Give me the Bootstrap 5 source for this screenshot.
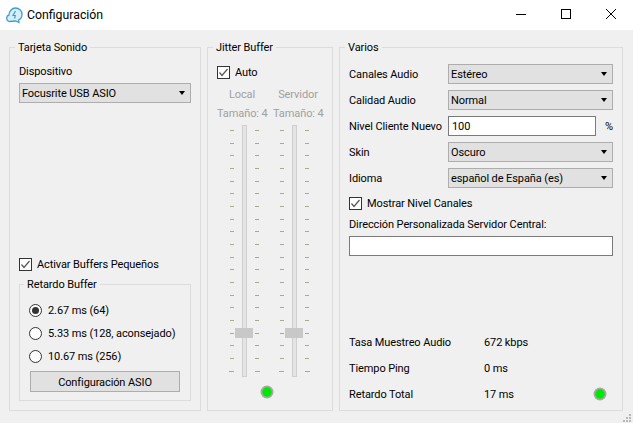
<!DOCTYPE html>
<html lang="es">
<head>
    <meta charset="UTF-8">
    <title>Configuración</title>
    <meta name="viewport" content="width=device-width, initial-scale=1">
    <link href="https://cdn.jsdelivr.net/npm/bootstrap@5.3.0/dist/css/bootstrap.min.css" rel="stylesheet">
    <style>
        body { width: 633px; height: 423px; overflow: hidden; background: #f0f0f0; color: #000; font: 11px/16px Roboto, sans-serif; letter-spacing: -.1px; }
        .title-bar { height: 30px; background: #fff; padding-left: 6px; font-size: 12.3px; letter-spacing: 0; }
        .title-bar .win-btns { margin-left: auto; }
        .win-btn { width: 45px; height: 30px; padding-bottom: 2px; }
        .panels { height: 393px; padding: 10px 10px 12px 9px; gap: 6px; position: relative; }
        .grp { border: 1px solid #dcdcdc; margin: 0; padding: 0; min-width: 0; }
        .grp > legend { float: none; width: auto; margin: 0 0 0 -4px; padding: 2px 3px 0; font-size: 11px; line-height: 12px; }
        .grp-sound { width: 192px; padding: 9px 9px 9px 9px; }
        .grp-jitter { width: 126px; padding: 11px 0 0 9px; }
        .grp-misc { width: 284px; padding: 10px 9px 6px 9px; }
        .grp-delay { height: 124px; padding: 9px 10px 8px 10px; }
        .grp-delay > legend { margin-left: -6px; }
        .combo { height: 20px; padding: 2px 5px 0 2px; background: #e1e1e1; border: 1px solid #adadad; border-radius: 0; color: #000; font-size: 11px; line-height: 16px; letter-spacing: -.1px; }
        .combo::after { margin: -2px 0 0; border-top: 4px solid #000; border-left: 3.5px solid transparent; border-right: 3.5px solid transparent; border-bottom: 0; }
        .combo-wide { width: 165px; }
        .row-gap { gap: 6px; }
        .field { height: 20px; }
        .field > span, .check-row > span { padding-top: 2px; }
        .field-lbl { width: 99px; flex: none; white-space: nowrap; }
        .txt-in { height: 20px; border: 1px solid #7a7a7a; background: #fff; padding: 0 3px; line-height: 20px; }
        .txt-level { width: 148px; }
        .check-row { gap: 5px; height: 14px; white-space: nowrap; margin: 0; }
        .check-row svg { flex: none; }
        .small-check { margin-bottom: 6px; }
        .show-levels { margin: 8px 0 6px; }
        .line-lbl { padding-top: 1px; margin-bottom: 3px; }
        .asio-btn { height: 21px; background: #e1e1e1; border: 1px solid #adadad; text-align: center; line-height: 21px; }
        .radio-stack { gap: 9px; margin: 3px 0 8px -1px; }
        .radio-stack .check-row { gap: 6px; }
        .dim { color: #a0a0a0; text-align: center; white-space: nowrap; padding-top: 1px; }
        .head-row { gap: 6px; }
        .local-row { margin-top: 7px; }
        .size-row { margin: 2px 0 3px; }
        .head-col { width: 50px; }
        .sliders-row { margin-left: 3px; }
        .slider-col { width: 50px; height: 252px; padding-left: 10px; }
        .ticks { width: 4px; padding: 5px 0; }
        .ticks span { display: block; height: 1px; background: #a8a899; }
        .ticks-l span:last-child { margin-left: -1px; width: 5px; }
        .ticks-r span:last-child { width: 5px; }
        .track { width: 5px; margin: 0 8px; background: #e3e5e5; border: 1px solid #cfcfcf; position: relative; }
        .thumb { position: absolute; left: -8px; top: 202px; width: 18px; height: 10px; background: #c8c8c8; }
        .led-slot { width: 100px; margin-top: 8px; }
        .stat-lbl { width: 135px; flex: none; }
        .led-stat { margin-right: 6px; }
        .size-grip { position: absolute; right: 1px; bottom: 1px; }
    </style>
</head>
<body>

<!-- barra de titulo -->
<div class="title-bar d-flex align-items-center">
    <svg width="17" height="17" viewBox="0 0 17 17" class="me-1">
        <path d="M4 14.500C1.500 14.500.5 12.500.7 10.700 1 9 2 8.200 3 8 3.200 4 6 1 9.500 1c3.500 0 6.500 2.800 6.500 6.300 0 3-1.500 5-3.500 5.700L13 15.500 9.500 14Z" fill="#d7edf8" stroke="#3f9fcf" stroke-width="1.300"/>
        <path d="M9.500 4 7 8.500h2.300L8.500 11.500" fill="none" stroke="#3f9fcf" stroke-width="1.200"/>
    </svg>
    <span>Configuración</span>
    <div class="win-btns d-flex">
        <div class="win-btn d-flex align-items-center justify-content-center"><svg width="10" height="10"><path d="M0 5.500h10" stroke="#000"/></svg></div>
        <div class="win-btn d-flex align-items-center justify-content-center"><svg width="10" height="10"><rect x=".5" y=".5" width="9" height="9" fill="none" stroke="#000"/></svg></div>
        <div class="win-btn d-flex align-items-center justify-content-center"><svg width="10" height="10"><path d="M0 0l10 10M10 0L0 10" stroke="#000"/></svg></div>
    </div>
</div>

<div class="panels d-flex">
    <!-- Tarjeta Sonido -->
    <fieldset class="grp grp-sound d-flex flex-column">
        <legend>Tarjeta Sonido</legend>
        <div class="line-lbl">Dispositivo</div>
        <button type="button" class="btn combo dropdown-toggle d-flex align-items-center justify-content-between">Focusrite USB ASIO</button>
        <label class="check-row small-check d-flex align-items-center mt-auto">
            <svg width="13" height="13"><rect x=".5" y=".5" width="12" height="12" fill="#fff" stroke="#333"/><path d="M2.500 6.500 5 9.500 10.500 3" fill="none" stroke="#555" stroke-width="1.200"/></svg>
            <span>Activar Buffers Pequeños</span>
        </label>
        <fieldset class="grp grp-delay d-flex flex-column">
            <legend>Retardo Buffer</legend>
            <div class="radio-stack d-flex flex-column">
                <label class="check-row d-flex align-items-center">
                    <svg width="13" height="13"><circle cx="6.500" cy="6.500" r="6" fill="#fff" stroke="#333"/><circle cx="6.500" cy="6.500" r="3.500" fill="#333"/></svg>
                    <span>2.67 ms (64)</span>
                </label>
                <label class="check-row d-flex align-items-center">
                    <svg width="13" height="13"><circle cx="6.500" cy="6.500" r="6" fill="#fff" stroke="#333"/></svg>
                    <span>5.33 ms (128, aconsejado)</span>
                </label>
                <label class="check-row d-flex align-items-center">
                    <svg width="13" height="13"><circle cx="6.500" cy="6.500" r="6" fill="#fff" stroke="#333"/></svg>
                    <span>10.67 ms (256)</span>
                </label>
            </div>
            <div class="asio-btn">Configuración ASIO</div>
        </fieldset>
    </fieldset>

    <!-- Jitter Buffer -->
    <fieldset class="grp grp-jitter">
        <legend>Jitter Buffer</legend>
        <label class="check-row d-flex align-items-center">
            <svg width="13" height="13"><rect x=".5" y=".5" width="12" height="12" fill="#fff" stroke="#333"/><path d="M2.500 6.500 5 9.500 10.500 3" fill="none" stroke="#555" stroke-width="1.200"/></svg>
            <span>Auto</span>
        </label>
        <div class="d-flex head-row local-row">
            <div class="head-col dim">Local</div>
            <div class="head-col dim">Servidor</div>
        </div>
        <div class="d-flex head-row size-row">
            <div class="head-col dim">Tamaño: 4</div>
            <div class="head-col dim">Tamaño: 4</div>
        </div>
        <div id="sliders" class="d-flex sliders-row"></div>
        <div class="d-flex justify-content-center led-slot">
            <svg width="14" height="14"><circle cx="7" cy="7" r="6.500" fill="#a8a8a8"/><circle cx="7" cy="7" r="4.700" fill="#00e800"/></svg>
        </div>
    </fieldset>

    <!-- Varios -->
    <fieldset class="grp grp-misc d-flex flex-column">
        <legend>Varios</legend>
        <div class="d-flex flex-column row-gap">
            <div class="field d-flex align-items-center"><span class="field-lbl">Canales Audio</span><button type="button" class="btn combo combo-wide dropdown-toggle d-flex align-items-center justify-content-between">Estéreo</button></div>
            <div class="field d-flex align-items-center"><span class="field-lbl">Calidad Audio</span><button type="button" class="btn combo combo-wide dropdown-toggle d-flex align-items-center justify-content-between">Normal</button></div>
            <div class="field d-flex align-items-center"><span class="field-lbl">Nivel Cliente Nuevo</span><div class="txt-in txt-level">100</div><span class="ms-auto">%</span></div>
            <div class="field d-flex align-items-center"><span class="field-lbl">Skin</span><button type="button" class="btn combo combo-wide dropdown-toggle d-flex align-items-center justify-content-between">Oscuro</button></div>
            <div class="field d-flex align-items-center"><span class="field-lbl">Idioma</span><button type="button" class="btn combo combo-wide dropdown-toggle d-flex align-items-center justify-content-between">español de España (es)</button></div>
        </div>
        <label class="check-row show-levels d-flex align-items-center">
            <svg width="13" height="13"><rect x=".5" y=".5" width="12" height="12" fill="#fff" stroke="#333"/><path d="M2.500 6.500 5 9.500 10.500 3" fill="none" stroke="#555" stroke-width="1.200"/></svg>
            <span>Mostrar Nivel Canales</span>
        </label>
        <div class="line-lbl">Dirección Personalizada Servidor Central:</div>
        <div class="txt-in"></div>
        <div class="d-flex flex-column row-gap mt-auto">
            <div class="field d-flex align-items-center"><span class="stat-lbl">Tasa Muestreo Audio</span><span>672 kbps</span></div>
            <div class="field d-flex align-items-center"><span class="stat-lbl">Tiempo Ping</span><span>0 ms</span></div>
            <div class="field d-flex align-items-center"><span class="stat-lbl">Retardo Total</span><span>17 ms</span>
                <svg width="14" height="14" class="ms-auto led-stat"><circle cx="7" cy="7" r="6.500" fill="#a8a8a8"/><circle cx="7" cy="7" r="4.700" fill="#00e800"/></svg>
            </div>
        </div>
    </fieldset>

    <svg class="size-grip" width="12" height="8"><g fill="#b8b8b8"><rect x="9" y="0" width="2" height="2"/><rect x="6" y="3" width="2" height="2"/><rect x="9" y="3" width="2" height="2"/><rect x="3" y="6" width="2" height="2"/><rect x="6" y="6" width="2" height="2"/><rect x="9" y="6" width="2" height="2"/></g></svg>
</div>

<script src="https://cdn.jsdelivr.net/npm/bootstrap@5.3.0/dist/js/bootstrap.bundle.min.js"></script>
<script>
    // two faders, 20 tick marks on each side
    function ticks(side) {
        let out = '<div class="ticks ticks-' + side + ' d-flex flex-column justify-content-between">';
        for (let i = 0; i < 20; i++) out += '<span></span>';
        return out + '</div>';
    }
    let html = '';
    for (let i = 0; i < 2; i++) {
        html += '<div class="slider-col d-flex">' + ticks('l') + '<div class="track"><div class="thumb"></div></div>' + ticks('r') + '</div>';
    }
    document.getElementById('sliders').innerHTML = html;
</script>

</body>
</html>
